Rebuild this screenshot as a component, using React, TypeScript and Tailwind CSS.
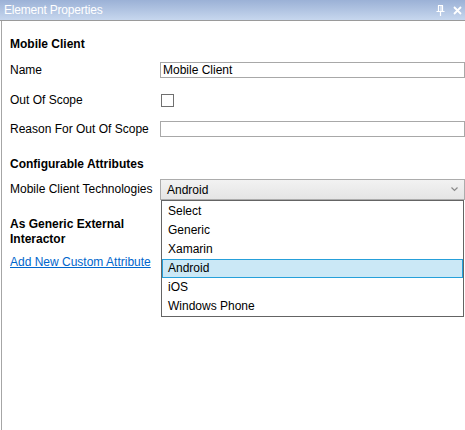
import React from 'react';

const options = ['Select', 'Generic', 'Xamarin', 'Android', 'iOS', 'Windows Phone'];

function PinIcon() {
  return (
    <svg width="9" height="11" viewBox="0 0 9 11" className="block">
      <path d="M2 0.5h5M2.5 0.5v6M6.5 0.5v6M0.5 6.5h8M4.5 6.5v4.5" stroke="#fff" strokeWidth="1.2" fill="none" />
      <path d="M5 1v5" stroke="#fff" strokeWidth="1" />
    </svg>
  );
}

function CloseIcon() {
  return (
    <svg width="9" height="9" viewBox="0 0 9 9" className="block">
      <path d="M1 1l7 7M8 1l-7 7" stroke="#fff" strokeWidth="1.8" />
    </svg>
  );
}

export default function App() {
  return (
    <div
      className="w-[465px] h-[430px] bg-white flex flex-col text-[12px] text-black overflow-hidden"
      style={{ fontFamily: '"Segoe UI", "Liberation Sans", Arial, sans-serif' }}
    >
      <div className="h-[21px] flex items-center justify-between pl-[4px] pr-[3px] bg-gradient-to-b from-[#9bb1d6] to-[#c7d7ee] border-b border-[#9a9a9a]">
        <span className="text-white text-[12px] leading-none tracking-[-0.2px]">Element Properties</span>
        <div className="flex items-center gap-[8px]">
          <PinIcon />
          <CloseIcon />
        </div>
      </div>

      <div className="flex-1 flex flex-col ml-[1px] border-l border-[#a6a6a6] pl-[8px]">
        <div className="mt-[15px] h-[16px] leading-[16px] font-bold">Mobile Client</div>

        <div className="mt-[10px] flex items-center h-[16px]">
          <div className="w-[150px]">Name</div>
          <div className="flex-1 h-[16px] border border-[#a8a8a8] pl-[2px] leading-[14px]">Mobile Client</div>
        </div>

        <div className="mt-[14px] flex items-center h-[16px]">
          <div className="w-[150px]">Out Of Scope</div>
          <div className="ml-[1px] w-[13px] h-[13px] border border-[#707070] bg-white" />
        </div>

        <div className="mt-[13px] flex items-center h-[16px]">
          <div className="w-[150px]">Reason For Out Of Scope</div>
          <div className="flex-1 h-[16px] border border-[#a8a8a8]" />
        </div>

        <div className="mt-[19px] h-[16px] leading-[16px] font-bold">Configurable Attributes</div>

        <div className="flex">
          <div className="w-[150px] flex flex-col">
            <div className="mt-[7px] h-[21px] leading-[21px]">Mobile Client Technologies</div>
            <div className="mt-[17px] font-bold leading-[15px] pr-[10px]">As Generic External Interactor</div>
            <div className="mt-[7px] h-[16px] leading-[16px] text-[#0066cc] underline whitespace-nowrap">
              Add New Custom Attribute
            </div>
          </div>

          <div className="flex-1 relative mt-[7px]">
            <div className="h-[21px] flex items-center justify-between border border-[#acacac] bg-gradient-to-b from-[#f2f2f2] to-[#e5e5e5] pl-[6px] pr-[6px]">
              <span>Android</span>
              <svg width="7" height="5" viewBox="0 0 7 5" className="block">
                <path d="M0.5 0.5l3 3 3-3" stroke="#8a8a8a" strokeWidth="1.2" fill="none" />
              </svg>
            </div>
            <div className="absolute left-[1px] right-[1px] top-[21px] border border-[#646464] bg-white flex flex-col pt-[1px]">
              {options.map((o) => (
                <div
                  key={o}
                  className={
                    o === 'Android'
                      ? 'h-[19px] leading-[17px] pl-[5px] border border-[#26a0da] bg-[#cbe8f6]'
                      : 'h-[19px] leading-[19px] pl-[6px]'
                  }
                >
                  {o}
                </div>
              ))}
            </div>
          </div>
        </div>
      </div>
    </div>
  );
}
